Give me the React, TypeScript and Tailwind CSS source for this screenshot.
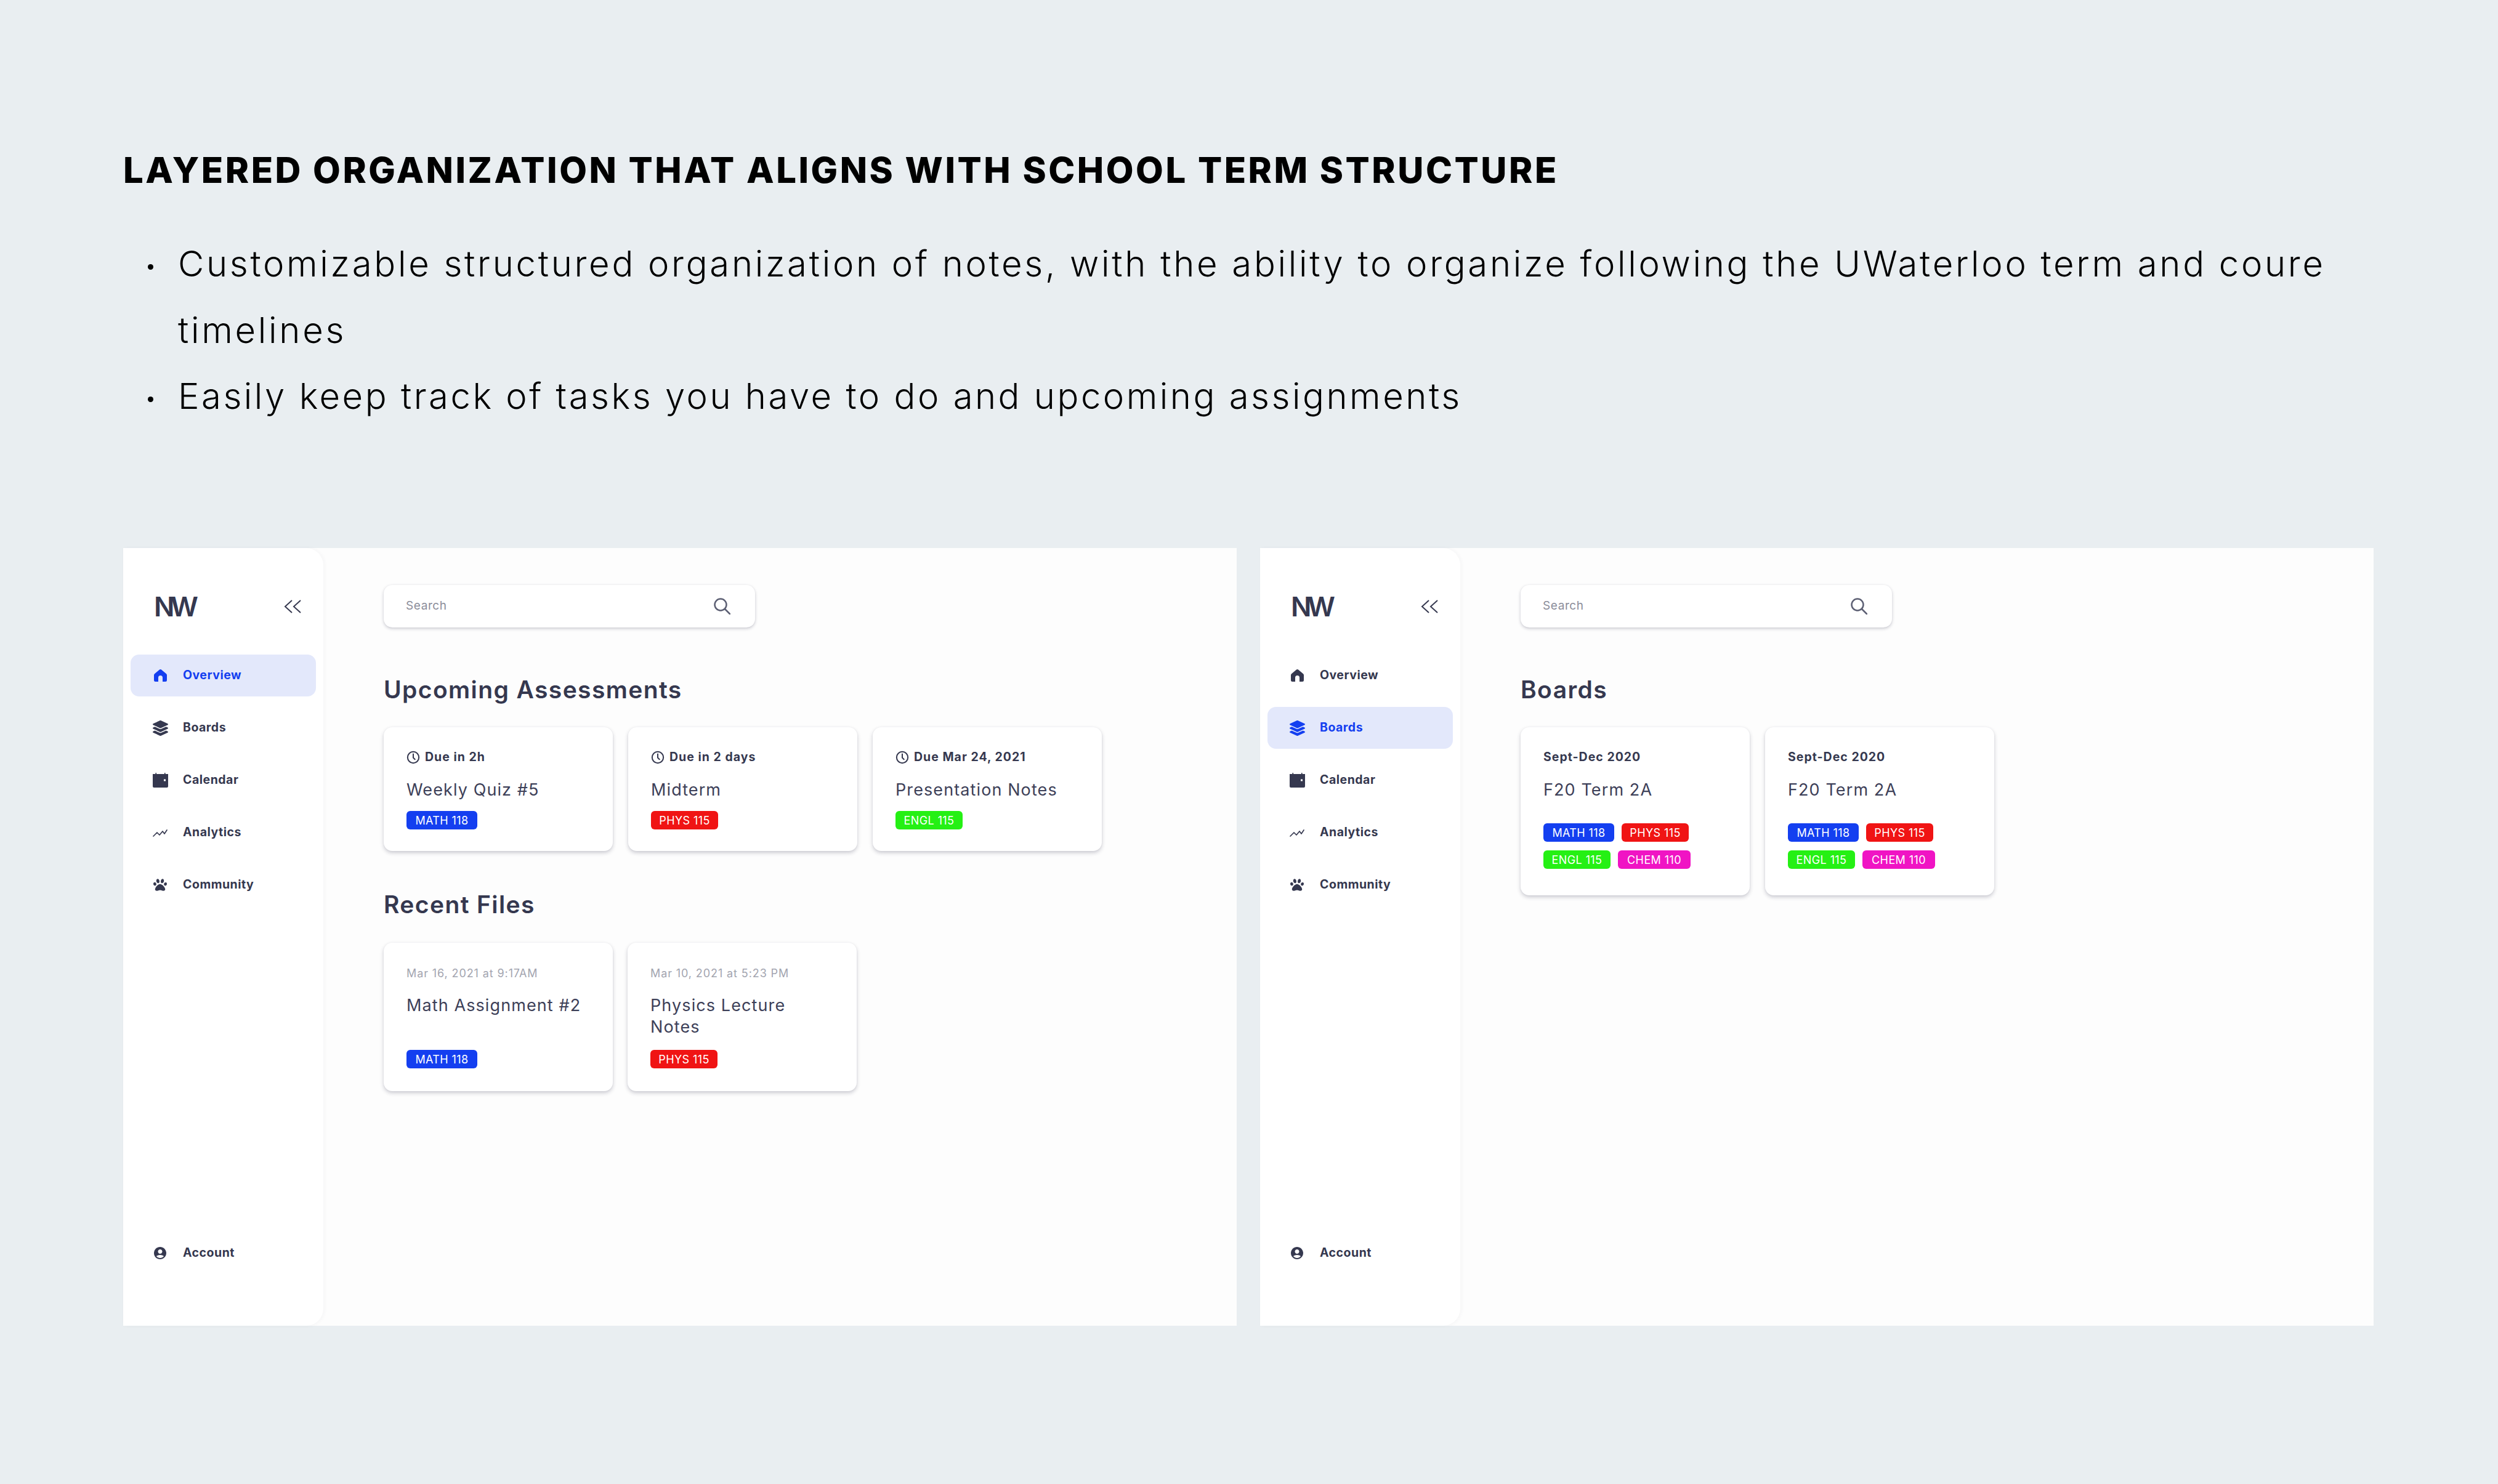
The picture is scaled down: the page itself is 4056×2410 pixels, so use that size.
import React from "react";
import { FaLayerGroup, FaPaw } from "react-icons/fa";
import { MdAccountCircle } from "react-icons/md";

const Clock = () => (
  <svg viewBox="0 0 24 24" className="w-[22px] h-[22px] flex-none" fill="none" stroke="currentColor" strokeWidth="2.2" strokeLinecap="round" strokeLinejoin="round">
    <circle cx="12" cy="12" r="10" />
    <path d="M12 6v6.5l3 3" />
  </svg>
);
const HomeIcon = () => (
  <svg viewBox="0 0 21 20" className="w-[21px] h-[20px]" fill="currentColor">
    <path fillRule="evenodd" d="M10.5 0C11.2 0 11.8 .3 12.3 .7L20 7.2c.6.5 1 1.2 1 2V17.5a2.5 2.5 0 0 1-2.5 2.5H14V13.5a3.5 3.5 0 0 0-7 0V20H2.5A2.5 2.5 0 0 1 0 17.5V9.2c0-.8.4-1.5 1-2L8.700 .7C9.200 .3 9.800 0 10.500 0z" />
  </svg>
);
const CalendarIcon = () => (
  <svg viewBox="0 0 25 24" className="w-[25px] h-[24px]" fill="currentColor">
    <path d="M4.500 0h1.500v2h13V0h1.500v2H25v1H0V2h4.500z" />
    <path fillRule="evenodd" d="M0 3h25v19a2 2 0 0 1-2 2H2a2 2 0 0 1-2-2zM18 10.500v3h3v-3z" />
  </svg>
);
const AnalyticsIcon = () => (
  <svg viewBox="0 0 24 13" className="w-[24px] h-[13px]" fill="none" stroke="currentColor" strokeWidth="1.7" strokeLinecap="round" strokeLinejoin="round">
    <path d="M1 12l6-6 4 4 5-6 3 4 4-6" />
  </svg>
);
const Chevrons = () => (
  <svg viewBox="0 0 28 22" className="w-[28px] h-[22px]" fill="none" stroke="currentColor" strokeWidth="2">
    <path d="M13 1L2 11l11 10M27 1L16 11l11 10" />
  </svg>
);
const SearchIcon = () => (
  <svg viewBox="0 0 27 27" className="w-[27px] h-[27px] text-[#5c5f73]" fill="none" stroke="currentColor" strokeWidth="2.500" strokeLinecap="round">
    <circle cx="11" cy="11" r="9.500" />
    <path d="M18 18l8 8" />
  </svg>
);

const navs = [
  { label: "Overview", icon: <HomeIcon /> },
  { label: "Boards", icon: <FaLayerGroup className="w-[25px] h-[25px]" /> },
  { label: "Calendar", icon: <CalendarIcon /> },
  { label: "Analytics", icon: <AnalyticsIcon /> },
  { label: "Community", icon: <FaPaw className="w-[22px] h-[22px]" /> },
];

function NavItem({ label, icon, active }: { label: string; icon: React.ReactNode; active?: boolean }) {
  return (
    <div className={`h-[68px] rounded-[14px] flex items-center pl-[33px] gap-[22px] text-[19.5px] font-bold tracking-[0.5px] ${active ? "bg-[#e3e8fb] text-[#143ff0]" : "text-[#35384f]"}`}>
      <div className="w-[30px] flex items-center justify-center">{icon}</div>
      <span>{label}</span>
    </div>
  );
}

function Sidebar({ active }: { active: string }) {
  return (
    <aside className="w-[325px] flex-none bg-white rounded-r-[28px] shadow-[2px_0_6px_rgba(40,40,70,0.04)] flex flex-col px-[12px] pt-[70px] pb-[84px]">
      <div className="h-[50px] flex items-center justify-between pl-[38px] pr-[24px] text-[#35384f]">
        <span className="text-[44px] font-semibold tracking-[-6.500px] leading-none">NW</span>
        <Chevrons />
      </div>
      <div className="mt-[53px] flex flex-col gap-[17px]">
        {navs.map((n) => (
          <NavItem key={n.label} label={n.label} icon={n.icon} active={n.label === active} />
        ))}
      </div>
      <div className="mt-auto">
        <NavItem label="Account" icon={<MdAccountCircle className="w-[24px] h-[24px]" />} />
      </div>
    </aside>
  );
}

const tagStyle: Record<string, string> = {
  "MATH 118": "bg-[#143ff0] w-[115px]",
  "PHYS 115": "bg-[#f01414] w-[109px]",
  "ENGL 115": "bg-[#25f014] w-[109px]",
  "CHEM 110": "bg-[#f014c4] w-[118px]",
};

function Tag({ name }: { name: string }) {
  return (
    <span className={`h-[30px] rounded-[6px] flex items-center justify-center text-white text-[18px] tracking-[0.4px] ${tagStyle[name]}`}>{name}</span>
  );
}

function Card({
  meta,
  clock,
  muted,
  title,
  tags,
  titleH,
  tagGap,
  pb,
}: {
  meta: string;
  clock?: boolean;
  muted?: boolean;
  title: string;
  tags: string[];
  titleH: string;
  tagGap: string;
  pb: string;
}) {
  return (
    <div className={`w-[372px] bg-white rounded-[14px] shadow-[0_3px_6px_rgba(40,40,70,0.24),0_0_3px_rgba(40,40,70,0.04)] pl-[37px] pr-[45px] pt-[35px] text-[#35384f] ${pb}`}>
      <div className={`h-[28px] flex items-center gap-[8px] whitespace-nowrap ${muted ? "text-[18px] tracking-[0.9px] text-[#a3a5b0]" : "text-[19.5px] tracking-[1px] font-bold"}`}>
        {clock && <Clock />}
        <span>{meta}</span>
      </div>
      <div className={`mt-[21px] text-[27px] leading-[35px] tracking-[1.1px] text-[#3d4058] ${titleH}`}>{title}</div>
      <div className={`flex flex-wrap gap-x-[12px] gap-y-[14px] ${tagGap}`}>
        {tags.map((t) => (
          <Tag key={t} name={t} />
        ))}
      </div>
    </div>
  );
}

function SearchBox() {
  return (
    <div className="w-[603px] h-[69px] bg-white rounded-[14px] shadow-[0_2px_5px_rgba(40,40,70,0.24),0_0_3px_rgba(40,40,70,0.04)] flex items-center justify-between pl-[36px] pr-[40px] text-[#8b8d9a]">
      <span className="text-[19px] tracking-[0.6px]">Search</span>
      <SearchIcon />
    </div>
  );
}

const Heading = ({ children, className }: { children: string; className: string }) => (
  <h2 className={`h-[50px] flex items-center text-[39px] font-semibold tracking-[1.4px] text-[#35384f] ${className}`}>{children}</h2>
);

function Panel({ active, children }: { active: string; children: React.ReactNode }) {
  return (
    <section className="w-[1808px] h-[1263px] bg-[#fdfdfd] flex">
      <Sidebar active={active} />
      <div className="flex-1 pl-[98px] pt-[60px]">
        <SearchBox />
        {children}
      </div>
    </section>
  );
}

const boardTags = ["MATH 118", "PHYS 115", "ENGL 115", "CHEM 110"];

export default function App() {
  return (
    <div className="w-[4056px] h-[2410px] bg-[#e9eef1] pt-[236px] text-black font-['Inter','Liberation_Sans',sans-serif]">
      <h1 className="pl-[200px] h-[80px] flex items-center text-[58px] font-extrabold tracking-[3.5px]">
        LAYERED ORGANIZATION THAT ALIGNS WITH SCHOOL TERM STRUCTURE
      </h1>
      <ul className="mt-[59px] pl-[240px] text-[58px] font-light leading-[107.5px]">
        <li className="flex gap-[40px] tracking-[3.7px]">
          <span className="mt-[54px] w-[9px] h-[9px] rounded-full bg-black flex-none" />
          <span className="w-[3510px]">Customizable structured organization of notes, with the ability to organize following the UWaterloo term and coure timelines</span>
        </li>
        <li className="flex gap-[40px] tracking-[3.5px]">
          <span className="mt-[54px] w-[9px] h-[9px] rounded-full bg-black flex-none" />
          <span>Easily keep track of tasks you have to do and upcoming assignments</span>
        </li>
      </ul>
      <div className="mt-[192.5px] pl-[200px] flex gap-[38px]">
        <Panel active="Overview">
          <Heading className="mt-[76px]">Upcoming Assessments</Heading>
          <div className="mt-[36px] flex gap-[25px]">
            <Card meta="Due in 2h" clock title="Weekly Quiz #5" tags={["MATH 118"]} titleH="" tagGap="mt-[17px]" pb="pb-[35px]" />
            <Card meta="Due in 2 days" clock title="Midterm" tags={["PHYS 115"]} titleH="" tagGap="mt-[17px]" pb="pb-[35px]" />
            <Card meta="Due Mar 24, 2021" clock title="Presentation Notes" tags={["ENGL 115"]} titleH="" tagGap="mt-[17px]" pb="pb-[35px]" />
          </div>
          <Heading className="mt-[62px]">Recent Files</Heading>
          <div className="mt-[37px] flex gap-[24px]">
            <Card meta="Mar 16, 2021 at 9:17AM" muted title="Math Assignment #2" tags={["MATH 118"]} titleH="h-[70px]" tagGap="mt-[20px]" pb="pb-[37px]" />
            <Card meta="Mar 10, 2021 at 5:23 PM" muted title="Physics Lecture Notes" tags={["PHYS 115"]} titleH="h-[70px]" tagGap="mt-[20px]" pb="pb-[37px]" />
          </div>
        </Panel>
        <Panel active="Boards">
          <Heading className="mt-[76px]">Boards</Heading>
          <div className="mt-[36px] flex gap-[25px]">
            <Card meta="Sept-Dec 2020" title="F20 Term 2A" tags={boardTags} titleH="" tagGap="mt-[37px]" pb="pb-[43px]" />
            <Card meta="Sept-Dec 2020" title="F20 Term 2A" tags={boardTags} titleH="" tagGap="mt-[37px]" pb="pb-[43px]" />
          </div>
        </Panel>
      </div>
    </div>
  );
}
